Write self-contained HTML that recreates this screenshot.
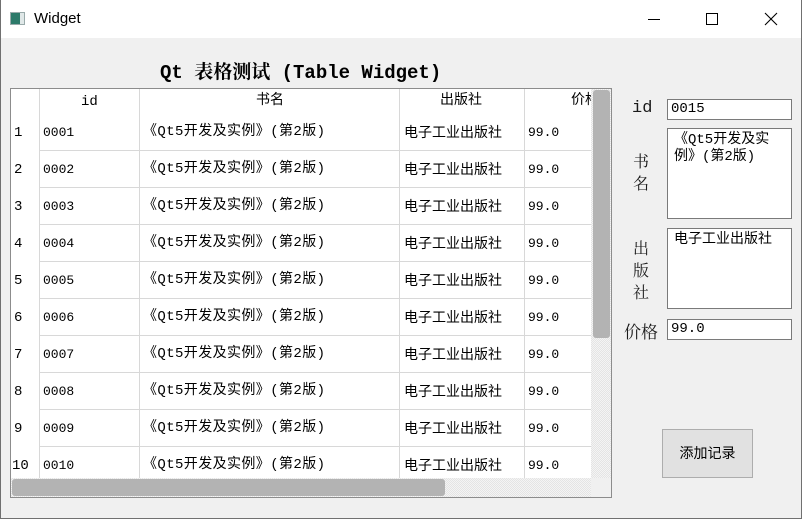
<!DOCTYPE html>
<html><head><meta charset="utf-8"><style>
*{margin:0;padding:0;box-sizing:border-box}
body{width:802px;height:519px;overflow:hidden;background:#f0f0f0;font-family:"Liberation Mono","Noto Sans CJK SC",monospace;font-size:13px;color:#000;position:relative}
.a{position:absolute}
#win{left:0;top:0;width:802px;height:519px;border:1px solid #707070;border-top:none}
#tb{left:1px;top:0;width:800px;height:38px;background:#fff}
.t{font-family:"Liberation Sans","Noto Sans CJK SC",sans-serif}
.cell{position:absolute;white-space:nowrap;line-height:16px}
.hl{position:absolute;height:1px;background:#d8d8d8}
.vl{position:absolute;width:1px;background:#d8d8d8}
.inp{position:absolute;background:#fff;border:1px solid #7a7a7a;padding:1px 3px;line-height:16px;font-size:13px}
.ta{font-family:"Liberation Mono","Noto Sans CJK SC",sans-serif;font-size:14px;line-height:17px;padding:3px 6px}
.lbl{position:absolute;font-family:"Noto Serif CJK SC","Liberation Serif",serif;font-size:16px;color:#1a1a1a}
.hatch{background:repeating-conic-gradient(#e4e4e4 0 25%,#f4f4f4 0 50%) 0 0/2px 2px}
</style></head><body>
<div id="win" class="a"></div>
<div id="tb" class="a"></div>
<div class="a" style="left:10px;top:12px;width:15px;height:13px;border:1px solid #9aa;background:linear-gradient(90deg,#2d7a6a 0 9px,#e0e8e8 9px)"></div>
<div class="a t" style="left:34px;top:10px;font-size:15px">Widget</div>
<div class="a" style="left:648px;top:19px;width:12px;height:1px;background:#000"></div>
<div class="a" style="left:706px;top:13px;width:12px;height:12px;border:1px solid #000"></div>
<svg class="a" style="left:764px;top:12px" width="14" height="14"><path d="M1 1L13 13M13 1L1 13" stroke="#000" stroke-width="1.1"/></svg>

<div class="a" style="left:160px;top:57px;font-family:'Liberation Mono','Noto Serif CJK SC',monospace;font-weight:bold;font-size:19px;white-space:nowrap">Qt 表格测试 (Table Widget)</div>

<div class="a" style="left:10px;top:88px;width:602px;height:410px;border:1px solid #8c8c8c;background:#fff;overflow:hidden">
<div class="a" style="left:0;top:0;width:600px;height:408px">
<div class="vl" style="left:28px;top:0;height:390px"></div>
<div class="vl" style="left:128px;top:0;height:390px"></div>
<div class="vl" style="left:388px;top:0;height:390px"></div>
<div class="vl" style="left:513px;top:0;height:390px"></div>
<div class="cell" style="left:70px;top:5px;font-size:14px">id</div>
<div class="cell" style="left:245px;top:4px;font-size:14px">书名</div>
<div class="cell" style="left:429px;top:4px;font-size:14px">出版社</div>
<div class="cell" style="left:560px;top:4px;font-size:14px">价格</div>
<div id="rows"></div>
</div>
<div class="a hatch" style="left:580px;top:0;width:20px;height:389px"></div>
<div class="a" style="left:582px;top:1px;width:17px;height:248px;background:#b3b3b3;border-radius:3px"></div>
<div class="a hatch" style="left:0;top:389px;width:580px;height:19px"></div>
<div class="a" style="left:1px;top:390px;width:433px;height:17px;background:#b3b3b3;border-radius:3px"></div>
<div class="a" style="left:580px;top:389px;width:20px;height:19px;background:#f0f0f0"></div>
</div>

<div class="lbl" style="left:632px;top:99px;font-family:'Liberation Mono',serif;font-size:17px">id</div>
<div class="inp" style="left:667px;top:99px;width:125px;height:21px;font-size:14px">0015</div>
<div class="lbl" style="left:633px;top:150px;line-height:22px">书<br>名</div>
<div class="inp ta" style="left:667px;top:128px;width:125px;height:91px;white-space:normal;word-break:break-all">《Qt5开发及实例》(第2版)</div>
<div class="lbl" style="left:633px;top:237px;line-height:22px">出<br>版<br>社</div>
<div class="inp ta" style="left:667px;top:228px;width:125px;height:81px">电子工业出版社</div>
<div class="lbl" style="left:624px;top:318px;font-size:17px">价格</div>
<div class="inp" style="left:667px;top:319px;width:125px;height:21px;font-size:14px">99.0</div>
<div class="a" style="left:662px;top:429px;width:91px;height:49px;background:#e1e1e1;border:1px solid #adadad;text-align:center;line-height:47px;font-family:'Liberation Sans','Noto Sans CJK SC',sans-serif;font-size:14px">添加记录</div>

<script>
var h='';for(var i=0;i<10;i++){var y=25+37*i;var n=(i+1<10?'000'+(i+1):'00'+(i+1));
h+='<div class="hl" style="left:29px;top:'+(y+36)+'px;width:552px"></div>';
h+='<div class="cell" style="left:'+(i==9?1:3)+'px;top:'+(y+11)+'px;font-size:14px">'+(i+1)+'</div>';
h+='<div class="cell" style="left:32px;top:'+(y+11)+'px">'+n+'</div>';
h+='<div class="cell" style="left:132px;top:'+(y+10)+'px;font-family:\'Liberation Mono\',\'Noto Sans CJK SC\',sans-serif;font-size:14px;letter-spacing:0.4px">《Qt5开发及实例》(第2版)</div>';
h+='<div class="cell" style="left:393px;top:'+(y+10)+'px;font-family:\'Noto Sans CJK SC\',sans-serif;font-size:14px">电子工业出版社</div>';
h+='<div class="cell" style="left:517px;top:'+(y+11)+'px">99.0</div>';}
document.getElementById('rows').innerHTML=h;
</script>
</body></html>
